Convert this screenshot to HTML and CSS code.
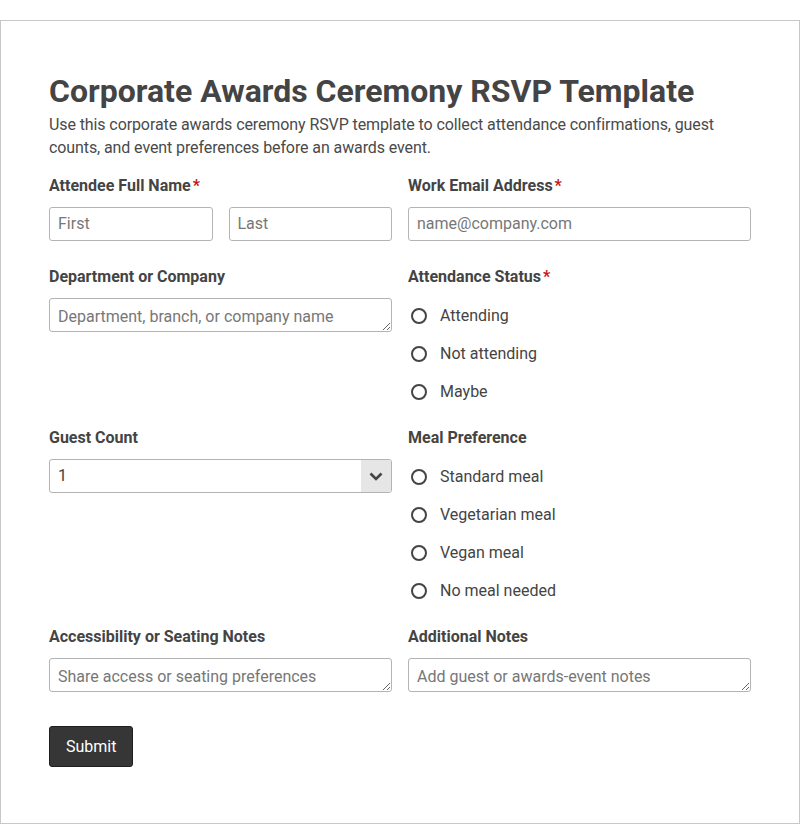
FILE: index.html
```html
<!DOCTYPE html>
<html lang="en">
<head>
    <meta charset="UTF-8">
    <meta name="viewport" content="width=device-width, initial-scale=1.0">
    <title>Corporate Awards Ceremony RSVP Template</title>
    <link rel="stylesheet" href="styles.css">
</head>
<body>
    <form class="rsvp-form" method="POST">
        <h1>Corporate Awards Ceremony RSVP Template</h1>
        <p class="intro">Use this corporate awards ceremony RSVP template to collect attendance confirmations, guest counts, and event preferences before an awards event.</p>

        <div class="grid">
            <div class="field">
                <label class="field-label">Attendee Full Name<span class="req">*</span></label>
                <div class="name-inputs">
                    <input type="text" name="first_name" placeholder="First">
                    <input type="text" name="last_name" placeholder="Last">
                </div>
            </div>
            <div class="field">
                <label class="field-label" for="email">Work Email Address<span class="req">*</span></label>
                <input type="email" id="email" name="email" placeholder="name@company.com">
            </div>

            <div class="field">
                <label class="field-label" for="department">Department or Company</label>
                <textarea id="department" name="department" rows="1" placeholder="Department, branch, or company name"></textarea>
            </div>
            <div class="field">
                <span class="field-label">Attendance Status<span class="req">*</span></span>
                <div class="radio-list">
                    <label class="radio"><input type="radio" name="attendance" value="attending"> Attending</label>
                    <label class="radio"><input type="radio" name="attendance" value="not-attending"> Not attending</label>
                    <label class="radio"><input type="radio" name="attendance" value="maybe"> Maybe</label>
                </div>
            </div>

            <div class="field">
                <label class="field-label" for="guests">Guest Count</label>
                <div class="select-wrap">
                    <select id="guests" name="guests">
                        <option>1</option>
                        <option>2</option>
                        <option>3</option>
                        <option>4</option>
                    </select>
                    <span class="select-arrow">
                        <svg width="14" height="9" viewBox="0 0 14 9"><path d="M1.5 1.5 L7 7 L12.5 1.5" fill="none" stroke="#444" stroke-width="2.6"/></svg>
                    </span>
                </div>
            </div>
            <div class="field">
                <span class="field-label">Meal Preference</span>
                <div class="radio-list">
                    <label class="radio"><input type="radio" name="meal" value="standard"> Standard meal</label>
                    <label class="radio"><input type="radio" name="meal" value="vegetarian"> Vegetarian meal</label>
                    <label class="radio"><input type="radio" name="meal" value="vegan"> Vegan meal</label>
                    <label class="radio"><input type="radio" name="meal" value="none"> No meal needed</label>
                </div>
            </div>

            <div class="field">
                <label class="field-label" for="access">Accessibility or Seating Notes</label>
                <textarea id="access" name="access" rows="1" placeholder="Share access or seating preferences"></textarea>
            </div>
            <div class="field">
                <label class="field-label" for="notes">Additional Notes</label>
                <textarea id="notes" name="notes" rows="1" placeholder="Add guest or awards-event notes"></textarea>
            </div>
        </div>

        <div class="actions">
            <button class="submit-btn" type="submit">Submit</button>
        </div>
    </form>
</body>
</html>
```

FILE: styles.css
```css
* {
    box-sizing: border-box;
}

:root {
    --text-color: #444;
    --muted-color: #777;
    --border-color: #b4b4b4;
    --required-color: #c4161c;
    --font-family: Roboto, "Liberation Sans", Arial, sans-serif;
}

body {
    margin: 0;
    font-family: var(--font-family);
    color: var(--text-color);
    background: #fff;
}

.rsvp-form {
    width: 800px;
    margin-top: 20px;
    padding: 51px 48px 56px;
    border: 1px solid #c8c8c8;
}

.rsvp-form h1 {
    margin: 0 0 3px;
    font-size: 32px;
    line-height: 38px;
    font-weight: 700;
}

.intro {
    margin: 0 0 16px;
    font-size: 16px;
    line-height: 23px;
    letter-spacing: -0.1px;
    color: #4a4a4a;
}

.grid {
    display: grid;
    grid-template-columns: 1fr 1fr;
    column-gap: 16px;
    row-gap: 25px;
}

.field-label {
    display: block;
    margin-bottom: 10px;
    font-size: 16px;
    line-height: 22px;
    font-weight: 700;
}

.req {
    color: var(--required-color);
    margin-left: 2px;
}

.name-inputs {
    display: flex;
    gap: 16px;
}

input[type="text"],
input[type="email"],
textarea,
select {
    display: block;
    width: 100%;
    height: 34px;
    margin: 0;
    padding: 0 8px 2px;
    font-family: var(--font-family);
    font-size: 16px;
    color: var(--text-color);
    background: #fff;
    border: 1px solid var(--border-color);
    border-radius: 3px;
}

textarea {
    padding: 8px 8px 4px;
    line-height: 20px;
    resize: vertical;
}

::placeholder {
    color: var(--muted-color);
    opacity: 1;
}

.select-wrap {
    position: relative;
}

select {
    appearance: none;
    -webkit-appearance: none;
    padding-right: 40px;
}

.select-arrow {
    position: absolute;
    top: 1px;
    right: 1px;
    bottom: 1px;
    width: 30px;
    display: flex;
    align-items: center;
    justify-content: center;
    background: #e6e6e6;
    border-radius: 0 2px 2px 0;
    pointer-events: none;
}

.radio-list {
    display: flex;
    flex-direction: column;
    gap: 18px;
    padding-top: 8px;
}

.radio {
    display: flex;
    align-items: center;
    height: 20px;
    font-size: 16px;
    line-height: 20px;
}

.radio input {
    appearance: none;
    -webkit-appearance: none;
    width: 16px;
    height: 16px;
    margin: 0 13px 0 3px;
    border: 2px solid #444;
    border-radius: 50%;
    background: #fff;
}

.radio input:checked {
    background: radial-gradient(circle, #444 0 4px, #fff 4.5px);
}

.actions {
    margin-top: 34px;
}

.submit-btn {
    height: 41px;
    padding: 0 16px;
    font-family: var(--font-family);
    font-size: 16px;
    color: #fff;
    background: #363636;
    border: 1px solid #1f1f1f;
    border-radius: 3px;
    cursor: pointer;
}

.submit-btn:hover {
    background: #222;
}
```
